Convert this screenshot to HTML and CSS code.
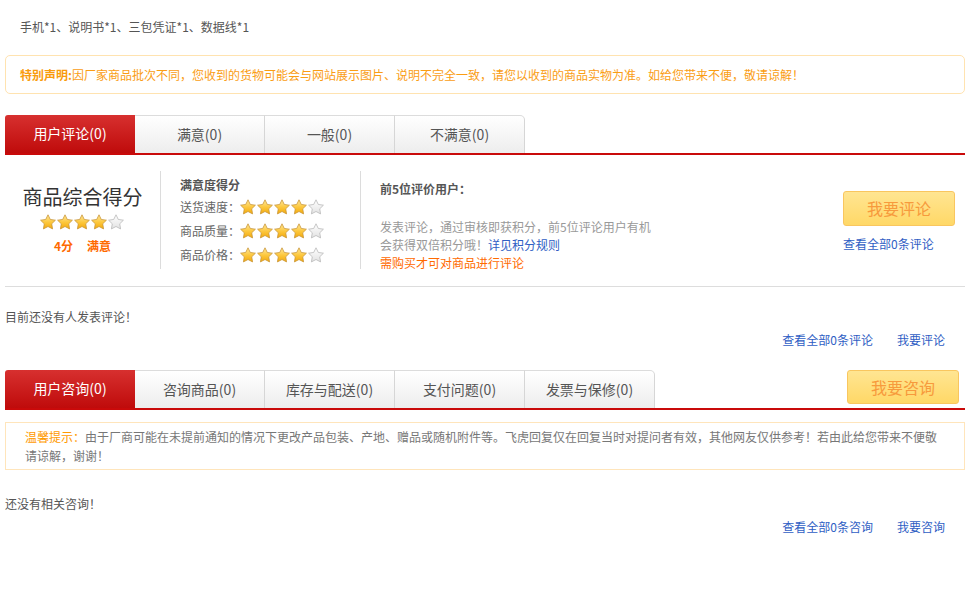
FILE: index.html
```html
<!DOCTYPE html>
<html lang="zh-CN">
<head>
<meta charset="utf-8">
<title>商品评论</title>
<link rel="stylesheet" href="styles.css">
</head>
<body>
<svg class="defs" width="0" height="0" aria-hidden="true">
  <defs>
    <linearGradient id="gOn" x1="0" y1="0" x2="0" y2="1">
      <stop offset="0" stop-color="#ffe89a"/>
      <stop offset="0.55" stop-color="#fcc63a"/>
      <stop offset="1" stop-color="#f3a90c"/>
    </linearGradient>
    <linearGradient id="gOff" x1="0" y1="0" x2="0" y2="1">
      <stop offset="0" stop-color="#ffffff"/>
      <stop offset="1" stop-color="#e2e2e2"/>
    </linearGradient>
    <polygon id="star" points="8,0.8 10.29,5.44 15.42,6.19 11.71,9.81 12.59,14.91 8,12.5 3.41,14.91 4.29,9.81 0.58,6.19 5.71,5.44"/>
  </defs>
</svg>
<div class="page">
  <p class="pack">手机*1、说明书*1、三包凭证*1、数据线*1</p>
  <div class="notice"><b>特别声明:</b>因厂家商品批次不同，您收到的货物可能会与网站展示图片、说明不完全一致，请您以收到的商品实物为准。如给您带来不便，敬请谅解！</div>

  <div class="tabs">
    <span class="tab on">用户评论(0)</span>
    <span class="tab">满意(0)</span>
    <span class="tab">一般(0)</span>
    <span class="tab last">不满意(0)</span>
  </div>

  <div class="score">
    <div class="col total">
      <div class="total-title">商品综合得分</div>
      <svg class="stars" width="85" height="16" viewBox="0 0 85 16"><use href="#star" class="on"/><use href="#star" x="17" class="on"/><use href="#star" x="34" class="on"/><use href="#star" x="51" class="on"/><use href="#star" x="68" class="off"/></svg>
      <div class="total-num">4分<span class="gap"></span>满意</div>
    </div>
    <div class="col detail">
      <div class="col-title">满意度得分</div>
      <div class="row">送货速度：<svg class="stars" width="85" height="16" viewBox="0 0 85 16"><use href="#star" class="on"/><use href="#star" x="17" class="on"/><use href="#star" x="34" class="on"/><use href="#star" x="51" class="on"/><use href="#star" x="68" class="off"/></svg></div>
      <div class="row">商品质量：<svg class="stars" width="85" height="16" viewBox="0 0 85 16"><use href="#star" class="on"/><use href="#star" x="17" class="on"/><use href="#star" x="34" class="on"/><use href="#star" x="51" class="on"/><use href="#star" x="68" class="off"/></svg></div>
      <div class="row">商品价格：<svg class="stars" width="85" height="16" viewBox="0 0 85 16"><use href="#star" class="on"/><use href="#star" x="17" class="on"/><use href="#star" x="34" class="on"/><use href="#star" x="51" class="on"/><use href="#star" x="68" class="off"/></svg></div>
    </div>
    <div class="col users">
      <div class="col-title">前5位评价用户：</div>
      <p class="users-text">发表评论，通过审核即获积分，前5位评论用户有机会获得双倍积分哦！<a class="link">详见积分规则</a></p>
      <p class="users-warn">需购买才可对商品进行评论</p>
    </div>
    <div class="col action">
      <a class="btn">我要评论</a>
      <a class="link">查看全部0条评论</a>
    </div>
  </div>

  <p class="empty">目前还没有人发表评论！</p>
  <div class="links"><a class="link">查看全部0条评论</a><a class="link">我要评论</a></div>

  <div class="tabs">
    <span class="tab on">用户咨询(0)</span>
    <span class="tab">咨询商品(0)</span>
    <span class="tab">库存与配送(0)</span>
    <span class="tab">支付问题(0)</span>
    <span class="tab last">发票与保修(0)</span>
    <a class="btn btn-ask">我要咨询</a>
  </div>

  <div class="tip"><b>温馨提示：</b>由于厂商可能在未提前通知的情况下更改产品包装、产地、赠品或随机附件等。飞虎回复仅在回复当时对提问者有效，其他网友仅供参考！若由此给您带来不便敬请谅解，谢谢！</div>

  <p class="empty empty2">还没有相关咨询！</p>
  <div class="links"><a class="link">查看全部0条咨询</a><a class="link">我要咨询</a></div>
</div>
</body>
</html>
```

FILE: styles.css
```css
* { box-sizing: border-box; }
html, body { margin: 0; padding: 0; background: #fff; }
body {
  font-family: "Noto Sans CJK SC", "Microsoft YaHei", sans-serif;
  font-size: 12px;
  color: #666;
}
p { margin: 0; }
a { text-decoration: none; cursor: pointer; }
.defs { position: absolute; width: 0; height: 0; overflow: hidden; }

.page { width: 960px; margin-left: 5px; }

.pack { margin-top: 18px; padding-left: 15px; line-height: 18px; color: #555; }

.notice {
  margin-top: 19px;
  border: 1px solid #ffe3b0;
  border-radius: 5px;
  line-height: 37px;
  padding-left: 14px;
  color: #fa9d14;
}
.notice b { font-weight: bold; color: #f99b0c; }

.tabs {
  margin-top: 21px;
  display: flex;
  align-items: flex-end;
  border-bottom: 2px solid #c90a0a;
}
.tab {
  width: 130px;
  height: 38px;
  line-height: 37px;
  text-align: center;
  font-size: 14px;
  color: #555;
  background: linear-gradient(#ffffff, #ededed);
  border-top: 1px solid #dcdcdc;
  border-right: 1px solid #d6d6d6;
}
.tab.on {
  color: #fff;
  background: linear-gradient(#d7302f, #bf0b0b);
  border: none;
  border-top-left-radius: 3px;
}
.tab.last { border-top-right-radius: 5px; }

.score {
  display: flex;
  padding: 16px 0 17px;
  border-bottom: 1px solid #dddddd;
}
.col { height: 98px; }
.total {
  width: 156px;
  border-right: 1px solid #dcdcdc;
  display: flex;
  flex-direction: column;
  align-items: center;
}
.total-title { margin-top: 13px; font-size: 20px; line-height: 26px; color: #333; }
.total .stars { margin-top: 4px; }
.total-num { margin-top: 7px; line-height: 18px; color: #ff6a00; font-weight: bold; }
.total-num .gap { display: inline-block; width: 14px; }

.stars { display: block; }
.stars use.on { fill: url(#gOn); stroke: #c9973a; stroke-width: 0.8; }
.stars use.off { fill: url(#gOff); stroke: #b9b9b9; stroke-width: 0.8; }

.detail {
  width: 200px;
  padding: 5px 0 0 19px;
  border-right: 1px solid #dcdcdc;
}
.col-title { line-height: 18px; font-weight: bold; color: #555; }
.row { display: flex; align-items: center; height: 24px; color: #666; }
.row .stars { margin-top: 1px; }

.users { width: 300px; padding: 9px 0 0 19px; }
.users .col-title { color: #555; }
.users-text { margin-top: 20px; width: 276px; line-height: 18px; color: #999; }
.users-warn { line-height: 18px; color: #ff6a00; }

.link { color: #2f5ec4; }

.action {
  margin-left: auto;
  padding: 20px 10px 0 0;
  display: flex;
  flex-direction: column;
  align-items: flex-start;
}
.btn {
  display: block;
  width: 112px;
  height: 35px;
  line-height: 33px;
  text-align: center;
  font-size: 16px;
  color: #f79a3c;
  background: linear-gradient(#ffe592, #ffd867);
  border: 1px solid #f9c65f;
  border-radius: 3px;
}
.action .link { margin-top: 9px; line-height: 18px; }

.empty { margin-top: 21px; line-height: 18px; color: #555; }
.links {
  margin-top: 5px;
  display: flex;
  justify-content: flex-end;
  gap: 24px;
  padding-right: 20px;
  line-height: 18px;
}

.btn-ask {
  margin-left: auto;
  margin-right: 6px;
  margin-bottom: 4px;
  width: 112px;
  height: 34px;
  line-height: 32px;
}

.tip {
  margin-top: 12px;
  border: 1px solid #ffe5bb;
  padding: 4px 19px;
  line-height: 19px;
  color: #777;
}
.tip b { font-weight: normal; color: #ff9a00; }

.empty2 { margin-top: 25px; }
```
